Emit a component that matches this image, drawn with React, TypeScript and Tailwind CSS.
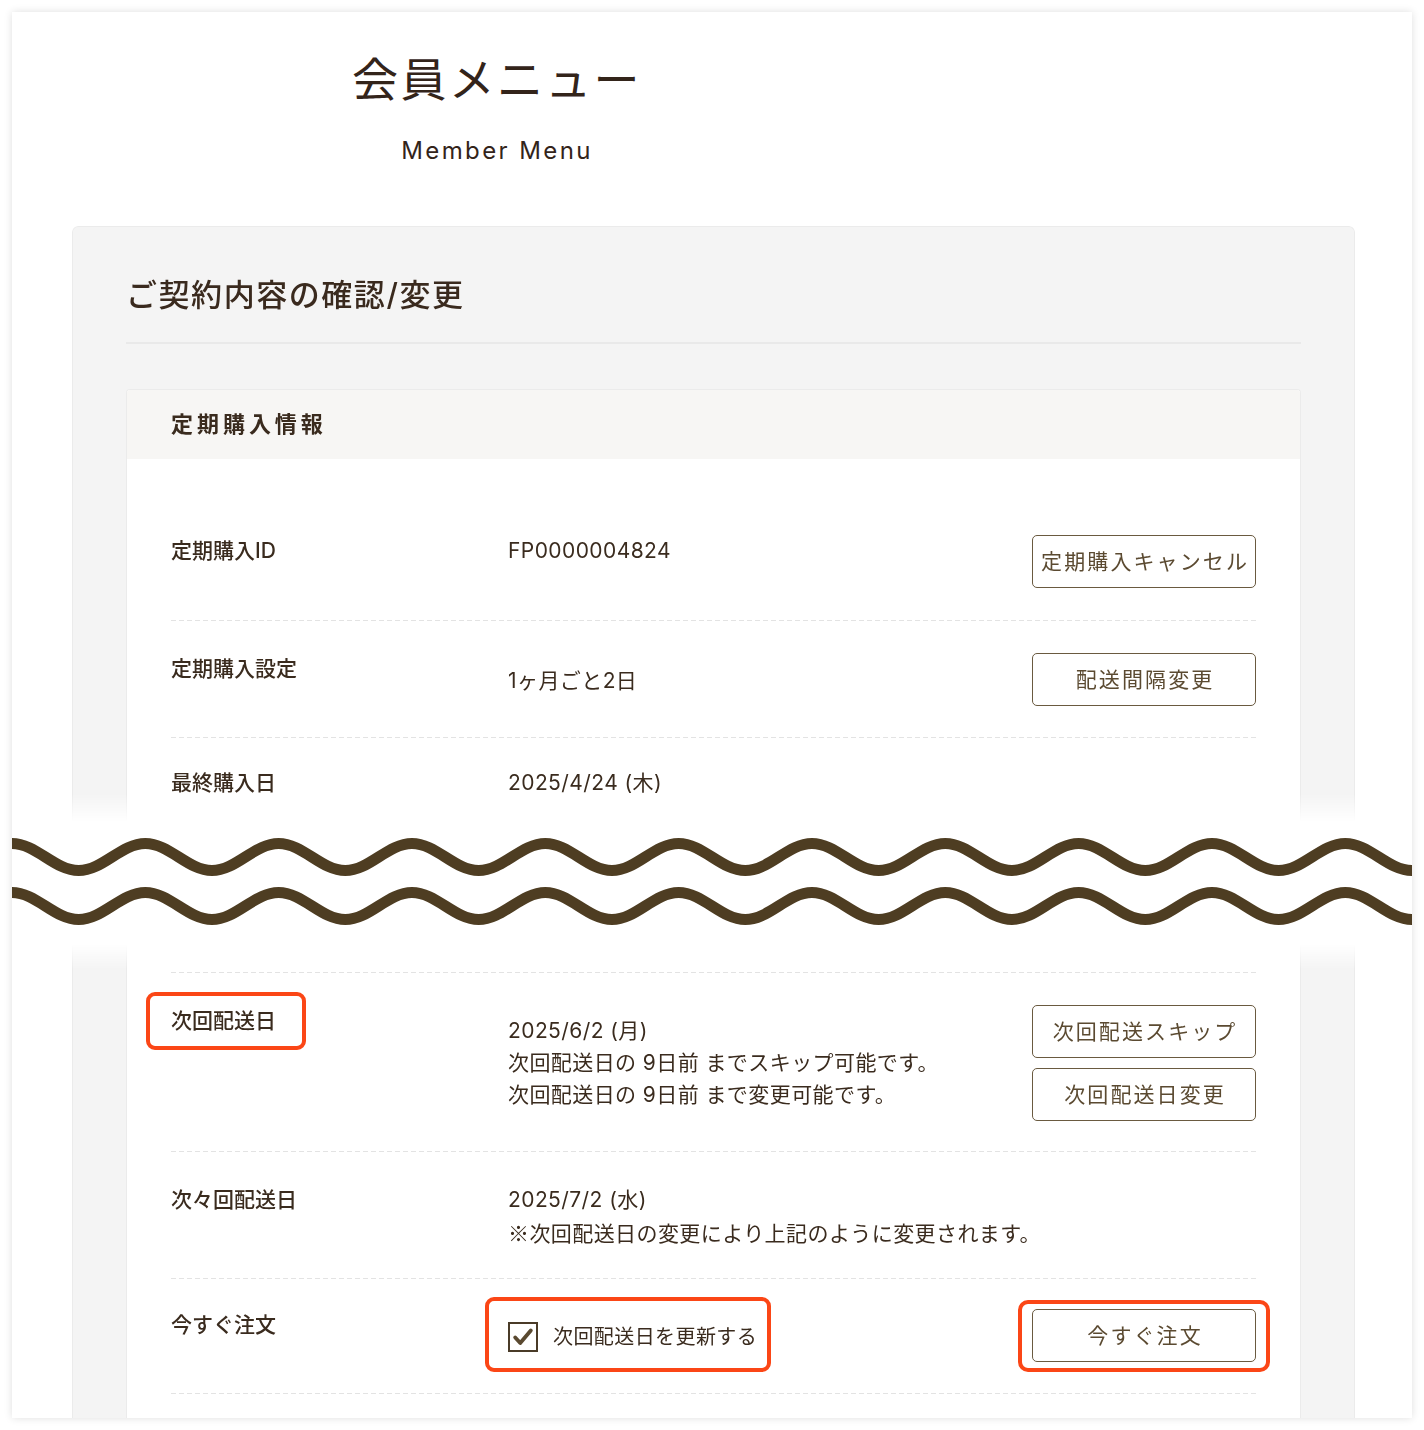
import React from "react";

// wave line for the "cut" between the two halves of the card
function wavePath(cy: number) {
  const P = 133.33;
  const A = 13.5;
  const h = P / 2;
  const k = 0.3642 * h;
  let d = `M ${-P} ${cy - A}`;
  for (let x = -P; x < 1400 + P; x += P) {
    d += ` C ${x + k} ${cy - A} ${x + h - k} ${cy + A} ${x + h} ${cy + A}`;
    d += ` C ${x + h + k} ${cy + A} ${x + P - k} ${cy - A} ${x + P} ${cy - A}`;
  }
  return d;
}

function Dash() {
  return (
    <div className="h-px w-full bg-[linear-gradient(to_right,#e3e3e3_60%,transparent_60%)] bg-[length:8px_1px] bg-repeat-x" />
  );
}

function Btn({ children }: { children: React.ReactNode }) {
  return (
    <button className="flex h-[53px] w-[224px] items-center justify-center rounded-[5px] border-[1.5px] border-[#6a5a40] bg-white pl-[0.1em] text-[21px] tracking-[0.1em] text-[#5b4a31]">
      {children}
    </button>
  );
}

function Ring({ className }: { className: string }) {
  return <span className={`pointer-events-none absolute rounded-[9px] border-[4px] border-[#fb4616] ${className}`} />;
}

function Row({
  label,
  children,
  action,
  valueTop,
  pt = "pt-[32px]",
  pb = "pb-[32px]",
}: {
  label: React.ReactNode;
  children?: React.ReactNode;
  action?: React.ReactNode;
  valueTop?: boolean;
  pt?: string;
  pb?: string;
}) {
  return (
    <div className={`grid grid-cols-[337px_1fr_224px] ${pt} ${pb}`}>
      <div className="self-start text-[21px] font-medium leading-[32px] text-[#3a2b1e]">{label}</div>
      <div
        className={`${valueTop ? "self-start" : "self-center"} whitespace-nowrap text-[21px] leading-[32px] tracking-[0.02em] text-[#3a2b1e]`}
      >
        {children}
      </div>
      <div className="flex flex-col gap-[10px]">{action}</div>
    </div>
  );
}

export default function App() {
  return (
    <div className="min-h-screen bg-white pt-[12px] font-['Inter','Noto_Sans_CJK_JP',sans-serif]">
      <div className="ml-[12px] h-[1406px] w-[1400px] overflow-hidden bg-white shadow-[0_0_8px_rgba(0,0,0,0.13)]">
        {/* Header */}
        <div className="w-[970px] pt-[40px] text-center">
          <h1 className="text-[46px] leading-[55px] tracking-[0.05em] text-[#33241a]">会員メニュー</h1>
          <p className="mt-[26px] text-[24px] leading-[36px] tracking-[0.1em] text-[#33241a]">Member Menu</p>
        </div>

        {/* Panel, upper half */}
        <div className="ml-[60px] mt-[57px] h-[596px] w-[1283px] overflow-hidden rounded-t-[6px] border border-b-0 border-[#ebebeb] bg-[#f4f4f4] px-[53px] pt-[46px] [mask-image:linear-gradient(to_bottom,#000_568px,transparent_596px)]">
          <h2 className="text-[31px] font-medium leading-[44px] tracking-[0.05em] text-[#3a2a1e]">ご契約内容の確認/変更</h2>
          <div className="mt-[25px] h-[2px] bg-[#e9e9e9]" />
          <div className="mt-[45px] overflow-hidden rounded-t-[4px] border border-b-0 border-[#ebebeb] bg-white">
            <div className="flex h-[69px] items-center bg-[#f7f6f4] px-[44px] text-[22px] font-bold tracking-[0.18em] text-[#3a2b1e]">
              定期購入情報
            </div>
            <div className="px-[44px] pt-[44px] pb-[40px]">
              <Row label="定期購入ID" valueTop action={<Btn>定期購入キャンセル</Btn>}>
                FP0000004824
              </Row>
              <Dash />
              <Row label="定期購入設定" pb="pb-[31px]" action={<Btn>配送間隔変更</Btn>}>
                <span className="mt-[2px] block">1ヶ月ごと2日</span>
              </Row>
              <Dash />
              <Row label="最終購入日" valueTop pt="pt-[29px]">
                2025/4/24 (木)
              </Row>
            </div>
          </div>
        </div>

        {/* Break */}
        <svg width="1400" height="122" viewBox="0 0 1400 122" className="block">
          <path d={wavePath(35)} fill="none" stroke="#4e3d22" strokeWidth="11" />
          <path d={wavePath(84)} fill="none" stroke="#4e3d22" strokeWidth="11" />
        </svg>

        {/* Panel, lower half */}
        <div className="ml-[60px] w-[1283px] border-x border-[#ebebeb] bg-[#f4f4f4] px-[53px] pb-[60px] [mask-image:linear-gradient(to_bottom,transparent,#000_25px)]">
          <div className="border-x border-[#ebebeb] bg-white px-[44px] pt-[28px] pb-[40px]">
            <Dash />
            <Row
              pb="pb-[30px]"
              label={
                <span className="relative inline-block">
                  次回配送日
                  <Ring className="-left-[25px] -top-[13px] h-[58px] w-[160px]" />
                </span>
              }
              action={
                <>
                  <Btn>次回配送スキップ</Btn>
                  <Btn>次回配送日変更</Btn>
                </>
              }
            >
              <div>2025/6/2 (月)</div>
              <div>次回配送日の 9日前 までスキップ可能です。</div>
              <div>次回配送日の 9日前 まで変更可能です。</div>
            </Row>
            <Dash />
            <Row label="次々回配送日" valueTop pb="pb-[28px]">
              <div>2025/7/2 (水)</div>
              <div>
                <span className="font-['Noto_Sans_CJK_JP',sans-serif]">※</span>次回配送日の変更により上記のように変更されます。
              </div>
            </Row>
            <Dash />
            <Row
              pt="pt-[30px]"
              pb="pb-[31px]"
              label="今すぐ注文"
              action={
                <div className="relative">
                  <Btn>今すぐ注文</Btn>
                  <Ring className="-left-[14px] -right-[14px] -top-[9px] -bottom-[10px] rounded-[10px]" />
                </div>
              }
            >
              <label className="relative flex w-fit items-center gap-[15px] pt-[2px]">
                <span className="flex h-[30px] w-[30px] items-center justify-center border-2 border-[#4a3b28] bg-white">
                  <svg viewBox="0 0 24 24" className="h-[22px] w-[22px]">
                    <path
                      d="M3.5 12.5 L9 18.5 L20.5 5"
                      fill="none"
                      stroke="#5a4930"
                      strokeWidth="4.2"
                      strokeLinecap="round"
                      strokeLinejoin="round"
                    />
                  </svg>
                </span>
                <span className="text-[20px] text-[#3a2b1e]">次回配送日を更新する</span>
                <Ring className="-left-[23px] -top-[22px] h-[75px] w-[286px]" />
              </label>
            </Row>
            <Dash />
          </div>
        </div>
      </div>
    </div>
  );
}
